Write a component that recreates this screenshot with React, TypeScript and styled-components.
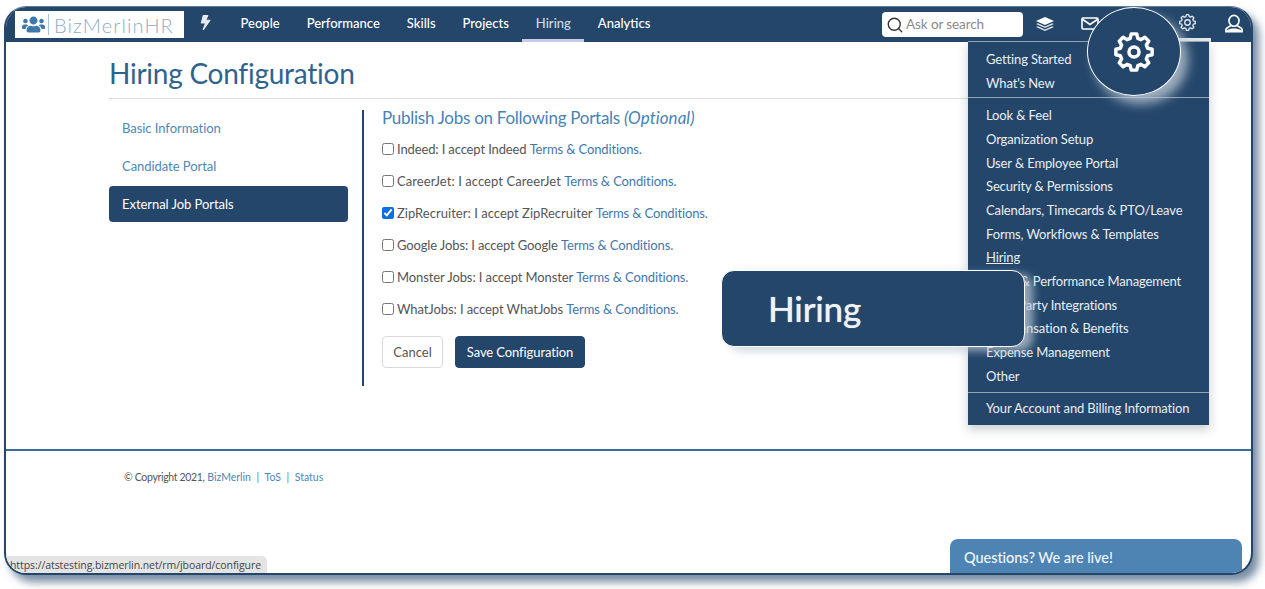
import styled, { createGlobalStyle } from 'styled-components';
import { FaBolt, FaUsers } from 'react-icons/fa';
import { Search } from 'lucide-react';

const navy = '#24466a';
const link = '#3f78ad';

const GlobalStyle = createGlobalStyle`
  html, body {
    margin: 0;
    padding: 0;
    background: #fff;
    font-family: Lato, "Open Sans", sans-serif;
  }
  * { box-sizing: border-box; }
`;

const navItems = ['People', 'Performance', 'Skills', 'Projects', 'Hiring', 'Analytics'];

const portals = [
  { name: 'Indeed', checked: false, tracking: -0.13 },
  { name: 'CareerJet', checked: false, tracking: 0.07 },
  { name: 'ZipRecruiter', checked: true, tracking: 0.03 },
  { name: 'Google Jobs', short: 'Google', checked: false, tracking: -0.13 },
  { name: 'Monster Jobs', short: 'Monster', checked: false, tracking: -0.1 },
  { name: 'WhatJobs', checked: false, tracking: -0.09 },
];

const menuGroups = [
  ['Getting Started', "What's New"],
  [
    'Look & Feel',
    'Organization Setup',
    'User & Employee Portal',
    'Security & Permissions',
    'Calendars, Timecards & PTO/Leave',
    'Forms, Workflows & Templates',
    'Hiring',
    'Goals & Performance Management',
    'Third Party Integrations',
    'Compensation & Benefits',
    'Expense Management',
    'Other',
  ],
  ['Your Account and Billing Information'],
];

// eight rounded teeth, same outline for the small nav gear and the big one
const cogPath = () => {
  const pts: string[] = [];
  for (let i = 0; i < 8; i++) {
    const a = (i * Math.PI) / 4;
    const spread = [-0.27, -0.15, 0.15, 0.27];
    const radius = [15.5, 20, 20, 15.5];
    spread.forEach((s, j) => {
      const x = 24 + radius[j] * Math.cos(a + s);
      const y = 24 + radius[j] * Math.sin(a + s);
      pts.push(`${j === 0 && i === 0 ? 'M' : 'L'}${x.toFixed(2)} ${y.toFixed(2)}`);
    });
  }
  return pts.join(' ') + ' Z';
};

const Cog = ({ size, ring, stroke }: { size: number; ring: number; stroke: number }) => (
  <svg width={size} height={size} viewBox="0 0 48 48" fill="none" stroke="currentColor" strokeWidth={stroke} strokeLinejoin="round">
    <path d={cogPath()} />
    <circle cx="24" cy="24" r={ring} />
  </svg>
);

const App = () => {
  return (
    <>
      <GlobalStyle />
      <Page>
        <Frame>
          <TopBar>
            <Logo>
              <FaUsers size={23} color="#3f78ad" />
              <LogoDivider />
              <LogoText>BizMerlinHR</LogoText>
            </Logo>
            <BoltLink>
              <FaBolt size={15} />
            </BoltLink>
            <NavList>
              {navItems.map((item) => (
                <NavItem key={item} $active={item === 'Hiring'}>
                  {item}
                </NavItem>
              ))}
            </NavList>
            <SearchBox>
              <Search size={18} color="#333" strokeWidth={1.8} />
              <SearchText>Ask or search</SearchText>
            </SearchBox>
            <NavIcons>
              <NavIcon $width={44}>
                <svg width="18" height="14" viewBox="0 0 18 14" fill="#fff">
                  <path d="M9 0 L18 4 L9 8 L0 4 Z" />
                  <path d="M2 6.3 L0 7 L9 11 L18 7 L16 6.3 L9 9.4 Z" opacity="0.85" />
                  <path d="M2 9.3 L0 10 L9 14 L18 10 L16 9.3 L9 12.4 Z" opacity="0.85" />
                </svg>
              </NavIcon>
              <NavIcon $width={46}>
                <svg width="18" height="13" viewBox="0 0 18 13" fill="none" stroke="#fff" strokeWidth="1.6">
                  <rect x="1" y="1" width="16" height="11" rx="1" />
                  <path d="M1 2 L9 7.5 L17 2" />
                </svg>
              </NavIcon>
              <NavIcon $width={58} />
              <GearTab>
                <Cog size={19} ring={7} stroke={3.4} />
              </GearTab>
              <NavIcon $width={45}>
                <svg width="18" height="19" viewBox="0 0 20 20" fill="none" stroke="#fff" strokeWidth="1.8">
                  <ellipse cx="10" cy="7" rx="5.6" ry="6" />
                  <path d="M6.6 12 C5 14 2 14 1 16.5 V19 H19 V16.5 C18 14 15 14 13.4 12" />
                  <path d="M2 17.5 C6 15 14 15 18 17.5 V19 H2 Z" fill="#fff" stroke="none" />
                </svg>
              </NavIcon>
            </NavIcons>
          </TopBar>

          <Main>
            <Title>Hiring Configuration</Title>
            <Columns>
              <Sidebar>
                <SideLink>Basic Information</SideLink>
                <SideLink>Candidate Portal</SideLink>
                <SideLink $active>External Job Portals</SideLink>
              </Sidebar>
              <Content>
                <Heading>
                  Publish Jobs on Following Portals <em>(Optional)</em>
                </Heading>
                {portals.map((p) => (
                  <PortalRow key={p.name}>
                    <Check type="checkbox" defaultChecked={p.checked} />
                    <PortalText $tracking={p.tracking}>
                      {p.name}: I accept {p.short ?? p.name}{' '}
                    </PortalText>
                    <TermsLink>Terms &amp; Conditions.</TermsLink>
                  </PortalRow>
                ))}
                <Actions>
                  <CancelButton>Cancel</CancelButton>
                  <SaveButton>Save Configuration</SaveButton>
                </Actions>
              </Content>
            </Columns>
          </Main>

          <Footer>
            <Copyright>© Copyright 2021,</Copyright> <FooterLink>BizMerlin</FooterLink>
            <Pipe>|</Pipe>
            <FooterLink>ToS</FooterLink>
            <Pipe>|</Pipe>
            <FooterLink>Status</FooterLink>
          </Footer>

          <Menu>
            {menuGroups.map((group) => (
              <MenuGroup key={group[0]}>
                {group.map((item) => (
                  <MenuItem key={item} $current={item === 'Hiring'}>
                    {item}
                  </MenuItem>
                ))}
              </MenuGroup>
            ))}
          </Menu>

          <Spotlight>
            <Cog size={44} ring={5.5} stroke={3.8} />
          </Spotlight>
          <Callout>Hiring</Callout>
          <StatusBar>https://atstesting.bizmerlin.net/rm/jboard/configure</StatusBar>
          <ChatTab>Questions? We are live!</ChatTab>
        </Frame>
      </Page>
    </>
  );
};

const Page = styled.div`
  width: 1265px;
  height: 589px;
  padding: 6px 0 0 4px;
  overflow: hidden;
`;

const Frame = styled.div`
  position: relative;
  width: 1249px;
  height: 569px;
  display: flex;
  flex-direction: column;
  background: #fff;
  border: 2px solid ${navy};
  border-top: 1px solid #5d7d9c;
  border-radius: 22px;
  overflow: hidden;
  box-shadow: 6px 7px 8px rgba(36, 70, 106, 0.62);
`;

const TopBar = styled.div`
  height: 35px;
  flex-shrink: 0;
  display: flex;
  align-items: center;
  background: ${navy};
  padding-left: 9px;
`;

const Logo = styled.div`
  width: 169px;
  height: 27px;
  display: flex;
  align-items: center;
  padding-left: 7px;
  background: #fff;
`;

const LogoDivider = styled.span`
  width: 1px;
  height: 21px;
  margin: 0 5px 0 3px;
  background: #a9c3da;
`;

const LogoText = styled.span`
  font-size: 20px;
  font-weight: 300;
  letter-spacing: 1.1px;
  color: #8fabc5;
`;

const BoltLink = styled.span`
  display: flex;
  color: #e6ebf0;
  margin: -5px 14px 0 14px;
  transform: skewX(-8deg);
`;

const NavList = styled.div`
  display: flex;
  height: 100%;
`;

const NavItem = styled.div<{ $active?: boolean }>`
  display: flex;
  align-items: center;
  padding: 0 13.5px;
  font-size: 13px;
  font-weight: 500;
  color: ${({ $active }) => ($active ? '#d5dbe6' : '#fff')};
  border-bottom: 3px solid ${({ $active }) => ($active ? '#c5cbe5' : 'transparent')};
`;

const SearchBox = styled.div`
  width: 141px;
  height: 25px;
  margin-left: auto;
  display: flex;
  align-items: center;
  gap: 2px;
  padding-left: 4px;
  background: #fff;
  border-radius: 4px;
`;

const SearchText = styled.span`
  font-size: 13.5px;
  letter-spacing: -0.1px;
  margin-top: -2px;
  color: #8a8a8a;
`;

const NavIcons = styled.div`
  display: flex;
  align-items: center;
  height: 100%;
  width: 228px;
`;

const NavIcon = styled.div<{ $width: number }>`
  flex: 0 0 ${({ $width }) => $width}px;
  display: flex;
  justify-content: center;
  margin-top: -2px;
  color: #fff;
`;

const GearTab = styled.div`
  flex: 0 0 40px;
  height: 100%;
  padding: 0 8px 0 0;
  display: flex;
  align-items: center;
  justify-content: center;
  color: #dfe6ee;
  border-bottom: 4px solid #e8ebee;
`;

const Main = styled.main`
  flex: 0 0 409px;
  padding: 13px 0 0 103px;
  border-bottom: 2px solid #3d6c9c;
`;

const Title = styled.h1`
  width: 1040px;
  margin: 0;
  padding-bottom: 7px;
  font-size: 28px;
  line-height: 36px;
  font-weight: 400;
  letter-spacing: -0.25px;
  color: #2f638f;
  border-bottom: 1px solid #dddddd;
`;

const Columns = styled.div`
  display: flex;
  margin-top: 11px;
`;

const Sidebar = styled.nav`
  width: 239px;
  display: flex;
  flex-direction: column;
  gap: 2px;
`;

const SideLink = styled.a<{ $active?: boolean }>`
  height: 36px;
  display: flex;
  align-items: center;
  padding-left: 13px;
  font-size: 13px;
  letter-spacing: -0.05px;
  border-radius: 4px;
  color: ${({ $active }) => ($active ? '#fff' : '#4f86b8')};
  background: ${({ $active }) => ($active ? navy : 'transparent')};
`;

const Content = styled.div`
  margin-left: 14px;
  width: 400px;
  height: 276px;
  padding-left: 18px;
  border-left: 2px solid ${navy};
`;

const Heading = styled.h2`
  margin: 0 0 7px;
  font-size: 17px;
  line-height: 16px;
  font-weight: 400;
  letter-spacing: -0.27px;
  white-space: nowrap;
  color: #4a82b5;

  em {
    letter-spacing: 0.05px;
  }
`;

const PortalRow = styled.label`
  height: 32px;
  display: flex;
  align-items: center;
  font-size: 13px;
  white-space: pre;
  color: #555;
`;

const PortalText = styled.span<{ $tracking: number }>`
  margin-left: 3px;
  letter-spacing: ${({ $tracking }) => $tracking}px;
`;

const Check = styled.input`
  width: 12px;
  height: 12px;
  margin: 0;
  accent-color: #0f6fe0;
`;

const TermsLink = styled.a`
  letter-spacing: -0.13px;
  color: ${link};
`;

const Actions = styled.div`
  display: flex;
  gap: 12px;
  margin-top: 11px;
`;

const CancelButton = styled.button`
  width: 61px;
  height: 32px;
  font-family: inherit;
  font-size: 13px;
  color: #555;
  background: #fff;
  border: 1px solid #d9d9d9;
  border-radius: 4px;
`;

const SaveButton = styled.button`
  width: 130px;
  height: 32px;
  font-family: inherit;
  font-size: 13px;
  letter-spacing: -0.1px;
  color: #fff;
  background: ${navy};
  border: 1px solid ${navy};
  border-radius: 4px;
`;

const Footer = styled.footer`
  padding: 20px 0 0 118px;
  font-size: 10.5px;
  color: #555;
`;

const Copyright = styled.span`
  letter-spacing: -0.33px;
`;

const FooterLink = styled.a`
  color: #4f86b8;
`;

const Pipe = styled.span`
  margin: 0 5.5px;
  color: #4f86b8;
`;

const Menu = styled.div`
  position: absolute;
  left: 962px;
  top: 34px;
  width: 241px;
  background: ${navy};
  box-shadow: 0 4px 10px rgba(60, 80, 90, 0.3);
`;

const MenuGroup = styled.div`
  padding: 5px 0 4px;
  border-top: 1px solid #8fa3b7;

  &:first-child {
    padding-bottom: 3px;
  }

  &:last-child {
    padding: 4px 0 5px;
  }
`;

const MenuItem = styled.div<{ $current?: boolean }>`
  height: 23.7px;
  padding-left: 18px;
  display: flex;
  align-items: center;
  font-size: 13px;
  letter-spacing: -0.13px;
  white-space: nowrap;
  color: #e9eef3;
  text-decoration: ${({ $current }) => ($current ? 'underline' : 'none')};
`;

const Spotlight = styled.div`
  position: absolute;
  left: 1081px;
  top: 0;
  width: 94px;
  height: 89px;
  display: flex;
  align-items: center;
  justify-content: center;
  color: #fff;
  background: ${navy};
  border: 1.5px solid #fff;
  border-radius: 50%;
  box-shadow: 7px 8px 11px rgba(190, 202, 214, 0.8);
`;

const Callout = styled.div`
  position: absolute;
  left: 715px;
  top: 263px;
  width: 304px;
  height: 77px;
  padding: 0 0 2px 46px;
  display: flex;
  align-items: center;
  font-size: 35px;
  font-weight: 500;
  letter-spacing: -0.2px;
  color: #f0f3f6;
  text-shadow: 0 0 1px rgba(255, 255, 255, 0.6);
  background: ${navy};
  border: 1.5px solid #fff;
  border-radius: 13px;
  box-shadow: 8px 4px 9px rgba(190, 202, 214, 0.75);
`;

const StatusBar = styled.div`
  position: absolute;
  left: 0;
  bottom: 0;
  height: 17px;
  width: 261px;
  padding-left: 4px;
  display: flex;
  align-items: center;
  font-family: "Open Sans", sans-serif;
  font-size: 10.5px;
  letter-spacing: -0.07px;
  color: #444;
  background: #e4e4e4;
  border-top-right-radius: 5px;
`;

const ChatTab = styled.div`
  position: absolute;
  left: 944px;
  bottom: 0;
  width: 292px;
  height: 34px;
  padding: 10px 0 0 14px;
  font-size: 14.5px;
  font-weight: 500;
  letter-spacing: -0.05px;
  color: #f2f6fa;
  background: #4d84b3;
  border-radius: 8px 8px 0 0;
`;

export default App;
